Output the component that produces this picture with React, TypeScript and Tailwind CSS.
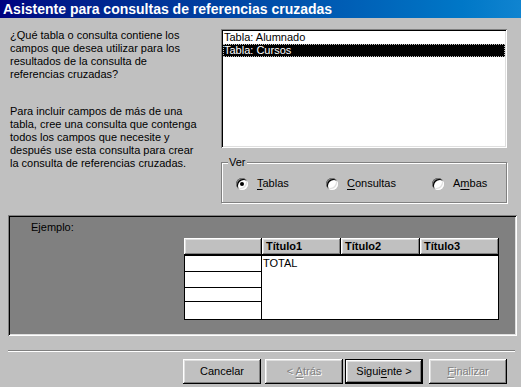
import React from "react";

const sunken =
  "shadow-[inset_1px_1px_#808080,inset_-1px_-1px_#ffffff,inset_2px_2px_#000000,inset_-2px_-2px_#dfdfdf]";
const raised =
  "shadow-[inset_-1px_-1px_#000000,inset_1px_1px_#ffffff,inset_-2px_-2px_#808080,inset_2px_2px_#dfdfdf]";

function Radio({ checked, mn, rest, pre = "" }: { checked?: boolean; mn: string; rest: string; pre?: string }) {
  return (
    <div className="flex items-center gap-[9px]">
      <span className={`relative flex h-[12px] w-[12px] items-center justify-center rounded-full bg-white ${sunken}`}>
        {checked && <span className="h-[4px] w-[4px] rounded-full bg-black" />}
      </span>
      <span>
        {pre}
        <span className="underline underline-offset-2">{mn}</span>
        {rest}
      </span>
    </div>
  );
}

function Btn({ children, disabled, def }: { children: React.ReactNode; disabled?: boolean; def?: boolean }) {
  const inner = (
    <div
      className={`flex h-full w-full items-center justify-center bg-[#c0c0c0] ${raised} ${
        disabled ? "text-[#808080] [text-shadow:1px_1px_#ffffff]" : "text-black"
      }`}
    >
      <span className="whitespace-pre">{children}</span>
    </div>
  );
  if (def) {
    return <div className="h-[25px] w-[78px] border border-black">{inner}</div>;
  }
  return <div className="h-[25px] w-[78px]">{inner}</div>;
}

export default function App() {
  return (
    <div className="h-[387px] w-[521px] overflow-hidden bg-[#c0c0c0] font-['Liberation_Sans',Arial,sans-serif] text-[11px] leading-[13px] text-black">
      {/* title bar */}
      <div className="flex h-[18px] items-center bg-linear-to-r from-[#000080] to-[#1084d0] pl-[3px] text-[14px] font-bold text-white">
        Asistente para consultas de referencias cruzadas
      </div>

      {/* top area */}
      <div className="flex pt-[11px]">
        <div className="w-[211px] pl-[10px]">
          <p>
            ¿Qué tabla o consulta contiene los
            <br />
            campos que desea utilizar para los
            <br />
            resultados de la consulta de
            <br />
            referencias cruzadas?
          </p>
          <p className="mt-[24px]">
            Para incluir campos de más de una
            <br />
            tabla, cree una consulta que contenga
            <br />
            todos los campos que necesite y
            <br />
            después use esta consulta para crear
            <br />
            la consulta de referencias cruzadas.
          </p>
        </div>

        <div className="ml-[10px] w-[286px]">
          <div className={`h-[119px] bg-white p-[2px] ${sunken}`}>
            <div className="h-[13px] pl-[1px]">Tabla: Alumnado</div>
            <div className="h-[13px] bg-black pl-[1px] text-white outline-1 -outline-offset-1 outline-dotted outline-[#c0c0c0]">
              Tabla: Cursos
            </div>
          </div>

          <fieldset className="mt-[8px] h-[47px] border border-[#808080] px-0 shadow-[inset_1px_1px_#ffffff,1px_1px_#ffffff]">
            <legend className="ml-[6px] bg-[#c0c0c0] px-[1px]">Ver</legend>
            <div className="flex pl-[14px] pt-[8px]">
              <div className="w-[90px]">
                <Radio checked mn="T" rest="ablas" />
              </div>
              <div className="w-[106px]">
                <Radio mn="C" rest="onsultas" />
              </div>
              <div>
                <Radio mn="m" pre="A" rest="bas" />
              </div>
            </div>
          </fieldset>
        </div>
      </div>

      {/* example panel */}
      <div className={`mx-[8px] mt-[12px] h-[121px] w-[509px] bg-[#808080] p-[2px] ${sunken}`}>
        <div className="pl-[21px] pt-[4px]">Ejemplo:</div>
        <div className="ml-[174px] mt-[4px] w-[315px]">
          <div className="flex h-[17px]">
            <div className={`w-[78px] bg-[#c0c0c0] ${raised}`} />
            {["Título1", "Título2", "Título3"].map((t) => (
              <div key={t} className={`flex w-[79px] items-center bg-[#c0c0c0] pl-[4px] font-bold ${raised}`}>
                {t}
              </div>
            ))}
          </div>
          <div className="flex h-[65px]">
            <div className="flex w-[78px] flex-col border border-black bg-white">
              <div className="h-[16px] border-b border-black" />
              <div className="h-[16px] border-b border-black" />
              <div className="h-[14px] border-b border-black" />
              <div className="flex-1" />
            </div>
            <div className="flex-1 border border-l-0 border-black bg-white pl-[1px] pt-[1px]">TOTAL</div>
          </div>
        </div>
      </div>

      {/* separator */}
      <div className="mx-[8px] mt-[14px] w-[507px] border-t border-b border-t-[#808080] border-b-white" />

      {/* buttons */}
      <div className="mt-[7px] flex pl-[183px]">
        <Btn>Cancelar</Btn>
        <div className="ml-[4px]">
          <Btn disabled>
            {"< "}
            <span className="underline underline-offset-2">A</span>trás
          </Btn>
        </div>
        <div className="ml-[2px]">
          <Btn def>
            Sigui<span className="underline underline-offset-2">e</span>nte &gt;
          </Btn>
        </div>
        <div className="ml-[6px]">
          <Btn disabled>
            <span className="underline underline-offset-2">F</span>inalizar
          </Btn>
        </div>
      </div>
    </div>
  );
}
